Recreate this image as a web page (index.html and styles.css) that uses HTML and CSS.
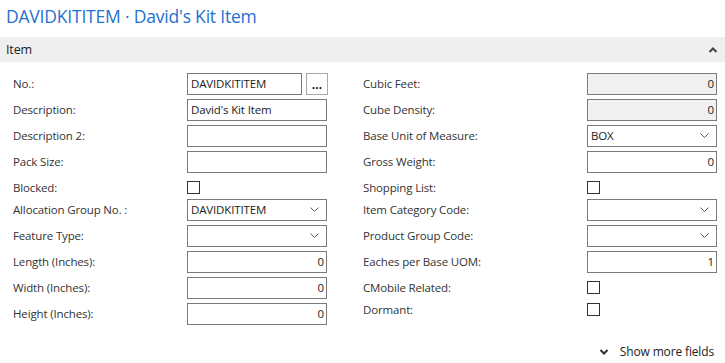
FILE: index.html
```html
<!DOCTYPE html>
<html lang="en">
<head>
    <meta charset="UTF-8">
    <meta name="viewport" content="width=device-width, initial-scale=1.0">
    <title>DAVIDKITITEM · David's Kit Item</title>
    <link rel="stylesheet" href="styles.css">
</head>
<body>
    <h1 class="page-title">DAVIDKITITEM · David's Kit Item</h1>

    <div class="section-head">
        <span>Item</span>
        <svg class="collapse" width="8" height="6" viewBox="0 0 8 6"><path d="M0.5 5 L4 1.5 L7.5 5" fill="none" stroke="#444" stroke-width="2"/></svg>
    </div>

    <div class="fields">
        <div class="col col-left">
            <div class="row">
                <label>No.:</label>
                <div class="lookup">
                    <input class="box" type="text" value="DAVIDKITITEM">
                    <button class="dots">...</button>
                </div>
            </div>
            <div class="row">
                <label>Description:</label>
                <input class="box" type="text" value="David's Kit Item">
            </div>
            <div class="row">
                <label>Description 2:</label>
                <input class="box" type="text" value="">
            </div>
            <div class="row">
                <label>Pack Size:</label>
                <input class="box" type="text" value="">
            </div>
            <div class="row check-row">
                <label>Blocked:</label>
                <span class="check"></span>
            </div>
            <div class="row">
                <label>Allocation Group No. :</label>
                <div class="box select">DAVIDKITITEM<svg class="caret" width="9" height="5" viewBox="0 0 9 5"><path d="M0.5 0.5 L4.5 4.5 L8.5 0.5" fill="none" stroke="#555" stroke-width="1"/></svg></div>
            </div>
            <div class="row">
                <label>Feature Type:</label>
                <div class="box select"><svg class="caret" width="9" height="5" viewBox="0 0 9 5"><path d="M0.5 0.5 L4.5 4.5 L8.5 0.5" fill="none" stroke="#555" stroke-width="1"/></svg></div>
            </div>
            <div class="row">
                <label>Length (Inches):</label>
                <input class="box num" type="text" value="0">
            </div>
            <div class="row">
                <label>Width (Inches):</label>
                <input class="box num" type="text" value="0">
            </div>
            <div class="row">
                <label>Height (Inches):</label>
                <input class="box num" type="text" value="0">
            </div>
        </div>

        <div class="col col-right">
            <div class="row">
                <label>Cubic Feet:</label>
                <input class="box num readonly" type="text" value="0" readonly>
            </div>
            <div class="row">
                <label>Cube Density:</label>
                <input class="box num readonly" type="text" value="0" readonly>
            </div>
            <div class="row">
                <label>Base Unit of Measure:</label>
                <div class="box select">BOX<svg class="caret" width="9" height="5" viewBox="0 0 9 5"><path d="M0.5 0.5 L4.5 4.5 L8.5 0.5" fill="none" stroke="#555" stroke-width="1"/></svg></div>
            </div>
            <div class="row">
                <label>Gross Weight:</label>
                <input class="box num" type="text" value="0">
            </div>
            <div class="row check-row">
                <label>Shopping List:</label>
                <span class="check"></span>
            </div>
            <div class="row">
                <label>Item Category Code:</label>
                <div class="box select"><svg class="caret" width="9" height="5" viewBox="0 0 9 5"><path d="M0.5 0.5 L4.5 4.5 L8.5 0.5" fill="none" stroke="#555" stroke-width="1"/></svg></div>
            </div>
            <div class="row">
                <label>Product Group Code:</label>
                <div class="box select"><svg class="caret" width="9" height="5" viewBox="0 0 9 5"><path d="M0.5 0.5 L4.5 4.5 L8.5 0.5" fill="none" stroke="#555" stroke-width="1"/></svg></div>
            </div>
            <div class="row">
                <label>Eaches per Base UOM:</label>
                <input class="box num" type="text" value="1">
            </div>
            <div class="row check-row">
                <label>CMobile Related:</label>
                <span class="check"></span>
            </div>
            <div class="row check-row">
                <label>Dormant:</label>
                <span class="check"></span>
            </div>
        </div>
    </div>

    <div class="more">
        <svg width="8" height="6" viewBox="0 0 8 6"><path d="M0.5 1 L4 4.5 L7.5 1" fill="none" stroke="#333" stroke-width="2"/></svg>
        <span>Show more fields</span>
    </div>
</body>
</html>
```

FILE: styles.css
```css
body {
    margin: 0;
    font-family: "Open Sans", sans-serif;
    font-size: 11.5px;
    letter-spacing: -0.15px;
    color: #333;
    background: #fff;
}
.page-title {
    margin: 0;
    padding: 4px 6px 0;
    height: 33px;
    font-size: 17.5px;
    font-weight: normal;
    letter-spacing: -0.2px;
    color: #2470d0;
}
.section-head {
    display: flex;
    align-items: center;
    justify-content: space-between;
    height: 25px;
    padding: 0 8px 0 6px;
    background: #efefef;
    font-size: 12.5px;
    color: #222;
}
.fields {
    display: flex;
    padding: 11px 0 0 13px;
    gap: 36px;
}
.col {
    display: flex;
    flex-direction: column;
    gap: 5px;
}
.col-left { width: 314px; }
.col-right { width: 354px; }
.row {
    display: flex;
    align-items: center;
    height: 21px;
}
.col-left label { width: 174px; }
.col-right label { width: 224px; }
label {
    flex: none;
    white-space: nowrap;
}
.box {
    box-sizing: border-box;
    height: 22px;
    border: 1px solid #7a7a7a;
    padding: 0 3px;
    font-family: inherit;
    font-size: 11.5px;
    letter-spacing: -0.15px;
    color: #222;
    background: #fff;
    outline: none;
}
.col-left .box { width: 140px; }
.col-right .box { width: 130px; }
.num { text-align: right; padding-right: 2px; }
.readonly { background: #f0f0f0; }
.lookup {
    display: flex;
    gap: 4px;
}
.col-left .lookup .box { width: 115px; }
.dots {
    box-sizing: border-box;
    width: 22px;
    height: 22px;
    border: 1px solid #a8a8a8;
    background: #fff;
    font-family: inherit;
    font-size: 12px;
    font-weight: bold;
    line-height: 22px;
    padding: 0;
    color: #111;
}
.select {
    display: flex;
    align-items: center;
    justify-content: space-between;
}
.caret { flex: none; margin-left: auto; margin-right: 4px; }
.check-row {
    height: 17px;
    align-items: flex-end;
}
.check-row label { line-height: 13px; }
.check {
    box-sizing: border-box;
    width: 13px;
    height: 13px;
    border: 1px solid #333;
}
.more {
    display: flex;
    align-items: center;
    justify-content: flex-end;
    gap: 12px;
    padding: 19px 11px 0 0;
    font-size: 12px;
    color: #222;
}
```
